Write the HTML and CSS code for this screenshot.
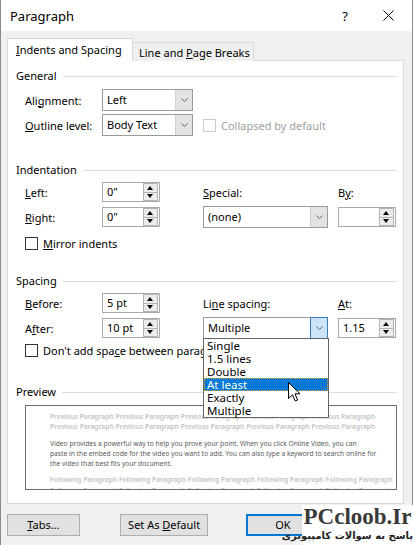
FILE: index.html
```html
<!DOCTYPE html>
<html lang="en">
<head>
  <meta charset="UTF-8" />
  <title>Paragraph</title>
  <link rel="stylesheet" href="styles.css">
</head>
<body>
  <div class="window">
    <div class="titlebar">
      <span class="title">Paragraph</span>
      <span class="help">?</span>
      <svg class="close" width="11" height="11" viewBox="0 0 11 11"><path d="M0.5 0.5L10.5 10.5M10.5 0.5L0.5 10.5" stroke="#000" stroke-width="1"/></svg>
    </div>

    <div class="tabs">
      <div class="tab active"><u>I</u>ndents and Spacing</div>
      <div class="tab">Line and <u>P</u>age Breaks</div>
    </div>

    <div class="panel">
      <div class="group-head">General</div>
      <div class="grid general">
        <span class="lbl">Ali<u>g</u>nment:</span>
        <div class="combo c2"><span>Left</span><i class="drop"><svg width="7" height="4" viewBox="0 0 7 4"><path d="M0.5 0.5L3.5 3.5L6.5 0.5" fill="none" stroke="#606060"/></svg></i></div>
        <span class="lbl"><u>O</u>utline level:</span>
        <div class="combo c2"><span>Body Text</span><i class="drop"><svg width="7" height="4" viewBox="0 0 7 4"><path d="M0.5 0.5L3.5 3.5L6.5 0.5" fill="none" stroke="#606060"/></svg></i></div>
        <div class="check disabled wide"><i class="box"></i>Collapsed by default</div>
      </div>

      <div class="group-head">Indentation</div>
      <div class="grid indent">
        <span class="lbl"><u>L</u>eft:</span>
        <div class="spin c2"><span>0"</span><i class="arrows"><b class="up"></b><b class="down"></b></i></div>
        <span class="lbl c4"><u>S</u>pecial:</span>
        <span class="lbl c6">B<u>y</u>:</span>
        <span class="lbl"><u>R</u>ight:</span>
        <div class="spin c2"><span>0"</span><i class="arrows"><b class="up"></b><b class="down"></b></i></div>
        <div class="combo c4"><span>(none)</span><i class="drop"><svg width="7" height="4" viewBox="0 0 7 4"><path d="M0.5 0.5L3.5 3.5L6.5 0.5" fill="none" stroke="#606060"/></svg></i></div>
        <div class="spin c6"><span></span><i class="arrows"><b class="up"></b><b class="down"></b></i></div>
        <div class="check full"><i class="box"></i><span><u>M</u>irror indents</span></div>
      </div>

      <div class="group-head">Spacing</div>
      <div class="grid spacing">
        <span class="lbl"><u>B</u>efore:</span>
        <div class="spin c2"><span>5 pt</span><i class="arrows"><b class="up"></b><b class="down"></b></i></div>
        <span class="lbl c4">Li<u>n</u>e spacing:</span>
        <span class="lbl c6"><u>A</u>t:</span>
        <span class="lbl">A<u>f</u>ter:</span>
        <div class="spin c2"><span>10 pt</span><i class="arrows"><b class="up"></b><b class="down"></b></i></div>
        <div class="combo focus c4"><span>Multiple</span><i class="drop"><svg width="7" height="4" viewBox="0 0 7 4"><path d="M0.5 0.5L3.5 3.5L6.5 0.5" fill="none" stroke="#606060"/></svg></i>
          <ul class="list">
            <li>Single</li>
            <li>1.5 lines</li>
            <li>Double</li>
            <li class="hot">At least</li>
            <li>Exactly</li>
            <li>Multiple</li>
          </ul>
        </div>
        <div class="spin c6"><span>1.15</span><i class="arrows"><b class="up"></b><b class="down"></b></i></div>
        <div class="check full"><i class="box"></i><span>Don't add spa<u>c</u>e between paragraphs of the same style</span></div>
      </div>

      <div class="group-head">Preview</div>
      <div class="preview">
        <p class="faded">Previous Paragraph Previous Paragraph Previous Paragraph Previous Paragraph Previous Paragraph<br>Previous Paragraph Previous Paragraph Previous Paragraph Previous Paragraph Previous Paragraph</p>
        <p class="sample">Video provides a powerful way to help you prove your point. When you click Online Video, you can<br>paste in the embed code for the video you want to add. You can also type a keyword to search online for<br>the video that best fits your document.</p>
        <p class="faded">Following Paragraph Following Paragraph Following Paragraph Following Paragraph Following Paragraph<br>Following Paragraph Following Paragraph Following Paragraph Following Paragraph Following Paragraph</p>
      </div>
    </div>

    <div class="buttons">
      <div class="btn tabs-btn"><u>T</u>abs...</div>
      <div class="btn default-btn">Set As <u>D</u>efault</div>
      <div class="btn ok-btn">OK</div>
      <div class="btn">Cancel</div>
    </div>

    <svg class="cursor" width="13" height="20" viewBox="0 0 13 20"><path d="M0.5 0.5L0.5 16.5L4.5 12.8L7.2 19L9.6 18L7 11.8L12 11.8Z" fill="#fff" stroke="#000" stroke-width="1" stroke-linejoin="round"/></svg>

    <div class="watermark">
      <div class="wm-name">PCcloob.Ir</div>
      <div class="wm-sub" dir="rtl">پاسخ به سوالات کامپیوتری</div>
    </div>
  </div>
</body>
</html>
```

FILE: styles.css
```css
* {
  box-sizing: border-box;
}
body {
  margin: 0;
  width: 413px;
  height: 545px;
  overflow: hidden;
  background: #f0f0f0;
  color: #000;
  font-family: 'Noto Sans', sans-serif;
  font-size: 11px;
}
u {
  text-decoration: underline;
  text-underline-offset: 1px;
}
.window {
  position: relative;
  height: 545px;
  border-left: 1px solid #8a8a8a;
  border-right: 1px solid #8a8a8a;
}
.titlebar {
  height: 31px;
  background: #fff;
  display: flex;
  align-items: center;
  padding-left: 9px;
}
.title {
  flex: 1;
  font-size: 13px;
}
.help {
  font-size: 13px;
  margin-right: 35px;
}
.close {
  margin-right: 18px;
}
.tabs {
  display: flex;
  align-items: flex-end;
  height: 23px;
  margin: 7px 0 0 6px;
  position: relative;
  z-index: 1;
  white-space: nowrap;
}
.tab {
  height: 19px;
  line-height: 19px;
  padding: 0 6px;
  width: 122px;
  border: 1px solid #d9d9d9;
  border-bottom: none;
  background: #f0f0f0;
}
.tab.active {
  height: 23px;
  line-height: 22px;
  width: 126px;
  padding-left: 8px;
  background: #fff;
  margin-right: -1px;
}
.panel {
  width: 397px;
  height: 444px;
  margin: -1px 0 0 6px;
  padding: 7px 6px 0 8px;
  background: #fff;
  border: 1px solid #d9d9d9;
}
.group-head {
  display: flex;
  align-items: center;
  height: 16px;
  line-height: 16px;
}
.group-head::after {
  content: '';
  flex: 1;
  height: 1px;
  margin-left: 6px;
  background: #dcdcdc;
}
.grid {
  display: grid;
  grid-template-columns: 77px 91px 10px 125px 10px 58px;
  align-items: center;
  margin-left: 9px;
  row-gap: 4px;
}
.grid > * {
  grid-column: 1;
}
.grid > .c2 { grid-column: 2; }
.grid > .c4 { grid-column: 4; }
.grid > .wide { grid-column: 4 / span 3; }
.grid > .c6 { grid-column: 6; }
.grid > .full { grid-column: 1 / span 6; }
.general {
  margin-top: 5px;
  margin-bottom: 26px;
  grid-template-rows: 22px 22px;
  row-gap: 3px;
}
.indent {
  margin-top: 4px;
  margin-bottom: 19px;
  grid-template-rows: 20px 22px 22px;
}
.spacing {
  margin-top: 4px;
  margin-bottom: 27px;
  grid-template-rows: 20px 22px 14px;
}
.combo {
  position: relative;
  height: 22px;
  line-height: 20px;
  padding-left: 4px;
  border: 1px solid #9a9a9a;
  background: #fff;
}
.drop {
  position: absolute;
  top: 0;
  right: 0;
  width: 17px;
  height: 20px;
  display: flex;
  align-items: center;
  justify-content: center;
  background: #e3e3e3;
  border-left: 1px solid #cfcfcf;
}
.combo.focus .drop {
  background: #cce4f7;
  border: 1px solid #3d7ab8;
  top: -1px;
  right: -1px;
  height: 22px;
  width: 18px;
}
.spin {
  position: relative;
  width: 58px;
  height: 20px;
  line-height: 18px;
  padding-left: 4px;
  border: 1px solid #a9a9a9;
  background: #fff;
}
.arrows {
  position: absolute;
  top: 0;
  right: 1px;
  width: 15px;
  height: 18px;
  display: flex;
  flex-direction: column;
}
.arrows b {
  flex: 1;
  position: relative;
  background: #ececec;
  border: 1px solid #b4b4b4;
}
.arrows b.down {
  border-top: none;
}
.arrows b::after {
  content: '';
  position: absolute;
  left: 3px;
  top: 2px;
  border-left: 3.5px solid transparent;
  border-right: 3.5px solid transparent;
}
.arrows b.up::after {
  border-bottom: 4px solid #000;
}
.arrows b.down::after {
  top: 1px;
  border-top: 4px solid #000;
}
.lbl {
  white-space: nowrap;
}
.check {
  display: flex;
  align-items: center;
  white-space: nowrap;
}
.box {
  width: 13px;
  height: 13px;
  margin-right: 5px;
  border: 1px solid #333;
  background: #fff;
}
.check.disabled {
  color: #a0a0a0;
}
.check.disabled .box {
  border-color: #cccccc;
}
.list {
  position: absolute;
  left: -1px;
  top: 20px;
  width: 126px;
  margin: 0;
  padding: 0;
  list-style: none;
  background: #fff;
  border: 1px solid #646464;
  font-size: 11.5px;
  z-index: 2;
}
.list li {
  height: 13px;
  line-height: 13px;
  padding-left: 3px;
}
.list li.hot {
  background: #0078d7;
  color: #fff;
  outline: 1px dotted #f5a623;
  outline-offset: -1px;
}
.preview {
  width: 372px;
  height: 85px;
  margin: 5px 0 0 9px;
  padding: 6px 0 0 24px;
  overflow: hidden;
  border: 1px solid #6d6d6d;
  font-size: 6.7px;
  line-height: 10.3px;
  white-space: nowrap;
}
.preview p {
  margin: 0 0 6px;
}
.faded {
  color: #c4c4c4;
  font-weight: 600;
}
.sample {
  color: #5a5a5a;
}
.buttons {
  display: flex;
  margin: 10px 0 0 6px;
}
.btn {
  width: 73px;
  height: 22px;
  line-height: 20px;
  text-align: center;
  background: #e1e1e1;
  border: 1px solid #adadad;
  margin-right: 10px;
}
.tabs-btn {
  margin-right: 40px;
}
.default-btn {
  width: 89px;
  margin-right: 38px;
}
.ok-btn {
  border: 2px solid #0078d7;
  line-height: 18px;
}
.cursor {
  position: absolute;
  left: 287px;
  top: 382px;
  z-index: 3;
}
.watermark {
  position: absolute;
  right: -1px;
  bottom: 0;
  width: 111px;
  height: 40px;
  background: #fff;
  text-align: center;
  z-index: 4;
}
.wm-name {
  font-family: 'Liberation Serif', serif;
  font-weight: bold;
  font-size: 23px;
  line-height: 24px;
  color: #3a3a3a;
}
.wm-sub {
  font-family: 'DejaVu Sans', sans-serif;
  font-weight: bold;
  font-size: 10px;
  line-height: 14px;
  white-space: nowrap;
  color: #222;
}
```
